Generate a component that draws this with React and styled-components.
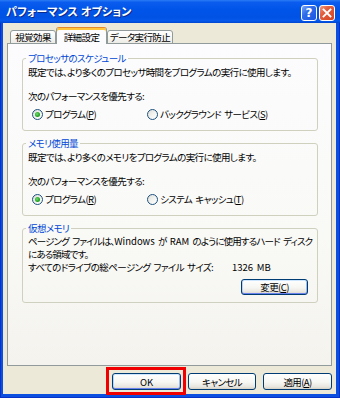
import React from 'react';
import styled, { createGlobalStyle } from 'styled-components';

const FONT = `"Noto Sans CJK JP", "Noto Sans CJK SC", sans-serif`;

const Global = createGlobalStyle`
  html, body { margin: 0; padding: 0; background: #ffffff; }
  body { font-family: ${FONT}; }
  * { box-sizing: border-box; }
`;

const Frame = styled.div`
  width: 340px;
  height: 398px;
  display: flex;
  flex-direction: column;
  background: #0A4FE0;
  box-shadow: inset 1px 0 0 #0831C8, inset -1px 0 0 #0831C8, inset 0 -1px 0 #0831C8;
  font-family: ${FONT};
  font-feature-settings: "palt";
  font-size: 9.5px;
  letter-spacing: -0.6px;
  color: #000;
  position: relative;
`;

const TitleBar = styled.div`
  height: 23px;
  flex: none;
  display: flex;
  align-items: center;
  padding: 0 5px 0 6px;
  background: linear-gradient(180deg, #2A7BF5 0%, #0A5CEE 10%, #0055E8 40%, #0052E4 75%, #0658EC 90%, #0046D0 100%);
`;

const Title = styled.div`
  flex: 1;
  color: #fff;
  font-weight: bold;
  font-size: 11px;
  letter-spacing: 0.2px;
  text-shadow: 1px 1px 0 #0A2A8C;
  line-height: 13px;
`;

const CapButton = styled.div`
  width: 16px;
  height: 16px;
  margin-left: 2px;
  margin-top: 2px;
  border: 1px solid #ffffff;
  border-radius: 3px;
  display: flex;
  align-items: center;
  justify-content: center;
  color: #fff;
  font-family: "DejaVu Sans", sans-serif;
  font-weight: bold;
  font-size: 12px;
  letter-spacing: 0;
  background: ${(p) =>
    p.$close
      ? 'linear-gradient(135deg, #F29A7E 0%, #E2603F 35%, #D6431F 100%)'
      : 'linear-gradient(135deg, #7FA9F7 0%, #2E6BE9 40%, #1A55E0 100%)'};
`;

const Body = styled.div`
  flex: 1;
  margin: 0 4px 4px 3px;
  background: #ECE9D8;
  display: flex;
  flex-direction: column;
  padding: 5px 4px 0 4px;
`;

const TabStrip = styled.div`
  height: 16px;
  display: flex;
  align-items: flex-end;
  padding-left: 3px;
  position: relative;
  z-index: 1;
  margin-bottom: -1px;
`;

const Tab = styled.div`
  width: ${(p) => p.$w}px;
  height: ${(p) => (p.$active ? 17 : 14)}px;
  border: 1px solid #919B9C;
  border-bottom: ${(p) => (p.$active ? 'none' : '1px solid #919B9C')};
  border-top-color: ${(p) => (p.$active ? '#E68B2C' : '#919B9C')};
  border-radius: 3px 3px 0 0;
  display: flex;
  align-items: center;
  justify-content: center;
  line-height: 12px;
  white-space: nowrap;
  padding-top: ${(p) => (p.$active ? 1 : 0)}px;
  background: ${(p) =>
    p.$active ? '#FCFCFE' : 'linear-gradient(180deg, #FFFFFF 0%, #F7F7F4 50%, #ECEBE6 100%)'};
  box-shadow: ${(p) => (p.$active ? 'inset 0 2px 0 #FFC73C' : 'none')};
`;

const Panel = styled.div`
  height: 323px;
  border: 1px solid #919B9C;
  background: linear-gradient(180deg, #FCFCFE 0%, #F9F9F6 60%, #F4F3EE 100%);
  padding: 8px 13px 0 14px;
  display: flex;
  flex-direction: column;
  gap: 6px;
`;

const Group = styled.fieldset`
  margin: 0;
  min-width: 0;
  border: 1px solid #D0D0BF;
  border-radius: 3px;
  padding: ${(p) => p.$pt ?? 2}px 5px ${(p) => p.$pb}px 5px;
  display: flex;
  flex-direction: column;
`;

const Legend = styled.legend`
  padding: 0 2px;
  margin-left: -2px;
  color: #0046D5;
  line-height: 12px;
  height: 12px;
`;

const Line = styled.div`
  line-height: ${(p) => p.$lh || 12}px;
  white-space: nowrap;
  margin-top: ${(p) => p.$mt || 0}px;
  letter-spacing: ${(p) => (p.$ls != null ? `${p.$ls}px` : 'inherit')};
  word-spacing: ${(p) => p.$ws || 0}px;
`;

const Latin = styled.span`
  letter-spacing: 0;
`;

const RadioRow = styled.div`
  display: flex;
  align-items: center;
  height: 12px;
  padding-left: 4px;
  margin-top: 6px;
`;

const Option = styled.label`
  display: flex;
  align-items: center;
  width: ${(p) => (p.$w ? `${p.$w}px` : 'auto')};
  line-height: 12px;
  white-space: nowrap;
  word-spacing: 1.5px;
`;

const RadioCircle = styled.span`
  width: 11px;
  height: 11px;
  flex: none;
  border-radius: 50%;
  border: 1px solid #1C5180;
  background: linear-gradient(135deg, #DCDCD7 0%, #F2F2EF 50%, #FFFFFF 100%);
  margin-right: 2px;
  display: flex;
  align-items: center;
  justify-content: center;
  &::after {
    content: '';
    display: ${(p) => (p.$checked ? 'block' : 'none')};
    width: 5px;
    height: 5px;
    border-radius: 50%;
    background: radial-gradient(circle at 40% 40%, #6EE06E 0%, #21A121 60%, #1A8A1A 100%);
  }
`;

const Key = styled.span`
  text-decoration: underline;
`;

const SizeRow = styled.div`
  display: flex;
  line-height: 12px;
  height: 12px;
  white-space: nowrap;
  word-spacing: 1.5px;
`;

const SizeLabel = styled.span`
  width: 204px;
`;

const Button = styled.div`
  width: ${(p) => p.$w}px;
  height: ${(p) => p.$h || 17}px;
  border: 1px solid #003C74;
  border-radius: 3px;
  display: flex;
  align-items: center;
  justify-content: center;
  line-height: 12px;
  background: linear-gradient(180deg, #FFFFFF 0%, #F6F6F3 55%, #E8E6DE 85%, #D6D0C5 100%);
  box-shadow: ${(p) =>
    p.$default ? 'inset 0 1px 0 #CEE7FF, inset 0 -1px 0 #6982EE, inset 1px 0 0 #B8D2F8, inset -1px 0 0 #9DBAF0' : 'none'};
  white-space: nowrap;
`;

const ChangeButton = styled(Button)`
  align-self: flex-end;
  margin-top: 6px;
  margin-right: 4px;
`;

const ButtonRow = styled.div`
  margin-top: 7px;
  display: flex;
  justify-content: flex-end;
  gap: 7px;
`;

const Marked = styled.div`
  position: relative;
`;

const Highlight = styled.div`
  position: absolute;
  top: -6px;
  left: -6px;
  right: -5px;
  bottom: -5px;
  border: 3px solid #F00000;
  pointer-events: none;
  z-index: 2;
`;

function CloseIcon() {
  return (
    <svg width="10" height="10" viewBox="0 0 10 10">
      <path d="M1.5 1.5 L8.5 8.5 M8.5 1.5 L1.5 8.5" stroke="#fff" strokeWidth="1.8" strokeLinecap="square" />
    </svg>
  );
}

export default function App() {
  return (
    <>
      <Global />
      <Frame>
        <TitleBar>
          <Title>パフォーマンス オプション</Title>
          <CapButton>?</CapButton>
          <CapButton $close>
            <CloseIcon />
          </CapButton>
        </TitleBar>
        <Body>
          <TabStrip>
            <Tab $w={46}>視覚効果</Tab>
            <Tab $w={51} $active>詳細設定</Tab>
            <Tab $w={66}>データ実行防止</Tab>
          </TabStrip>
          <Panel>
            <Group $pb={10}>
              <Legend>プロセッサのスケジュール</Legend>
              <Line>既定では、より多くのプロセッサ時間をプログラムの実行に使用します。</Line>
              <Line $mt={12}>次のパフォーマンスを優先する:</Line>
              <RadioRow>
                <Option $w={115}>
                  <RadioCircle $checked />
                  プログラム(<Key>P</Key>)
                </Option>
                <Option>
                  <RadioCircle />
                  バックグラウンド サービス(<Key>S</Key>)
                </Option>
              </RadioRow>
            </Group>
            <Group $pb={10}>
              <Legend>メモリ使用量</Legend>
              <Line>既定では、より多くのメモリをプログラムの実行に使用します。</Line>
              <Line $mt={12}>次のパフォーマンスを優先する:</Line>
              <RadioRow>
                <Option $w={115}>
                  <RadioCircle $checked />
                  プログラム(<Key>R</Key>)
                </Option>
                <Option>
                  <RadioCircle />
                  システム キャッシュ(<Key>T</Key>)
                </Option>
              </RadioRow>
            </Group>
            <Group $pt={1} $pb={7}>
              <Legend>仮想メモリ</Legend>
              <Line $lh={13} $ls={-0.85} $ws={2}>
                ページング ファイルは、<Latin>Windows</Latin> が <Latin>RAM</Latin> のように使用するハード ディスク
                <br />
                にある領域です。
              </Line>
              <SizeRow>
                <SizeLabel>すべてのドライブの総ページング ファイル サイズ:</SizeLabel>
                <Latin>1326 MB</Latin>
              </SizeRow>
              <ChangeButton $w={67} $h={16} $default>
                変更(<Key>C</Key>)
              </ChangeButton>
            </Group>
          </Panel>
          <ButtonRow>
            <Marked>
              <Button $w={69} $default>
                <Latin>OK</Latin>
              </Button>
              <Highlight />
            </Marked>
            <Button $w={68}>キャンセル</Button>
            <Button $w={69}>
              適用(<Key>A</Key>)
            </Button>
          </ButtonRow>
        </Body>
      </Frame>
    </>
  );
}
